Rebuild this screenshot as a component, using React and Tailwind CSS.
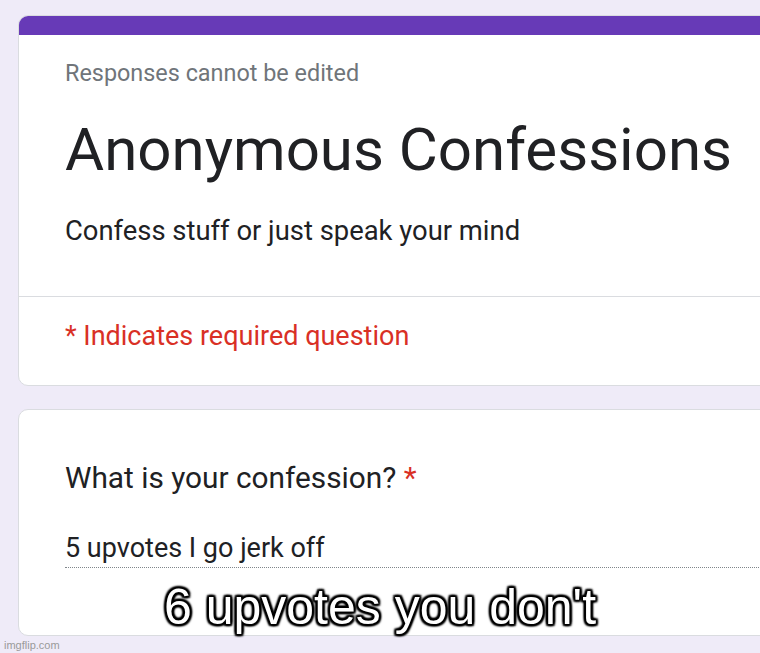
import React from "react";

export default function App() {
  const roboto = { fontFamily: "Roboto, 'Noto Sans', sans-serif" };
  return (
    <div className="relative w-[760px] h-[653px] overflow-hidden bg-[#efebf8]" style={roboto}>
      <div className="pl-[18px] pt-[15px] flex flex-col gap-[23px]">
        {/* Card 1 */}
        <div className="w-[800px] bg-white rounded-[10px] border border-[#dadce0] overflow-hidden">
          <div className="h-[19px] bg-[#673ab7]" />
          <div className="pl-[46px] pt-[23px] pb-[48px] border-b border-[#dadce0]">
            <div className="text-[23.4px] leading-[30px] text-[#70757a]">
              Responses cannot be edited
            </div>
            <div className="mt-[26px] text-[60px] leading-[72px] text-[#202124]">
              Anonymous Confessions
            </div>
            <div className="mt-[28px] text-[27.4px] leading-[34px] text-[#202124]">
              Confess stuff or just speak your mind
            </div>
          </div>
          <div className="pl-[46px] pt-[22px] pb-[32px]">
            <div className="text-[27px] leading-[34px] text-[#d93025]">
              * Indicates required question
            </div>
          </div>
        </div>

        {/* Card 2 */}
        <div className="w-[800px] h-[227px] bg-white rounded-[10px] border border-[#dadce0] pl-[46px] pt-[49px]">
          <div className="text-[29.8px] leading-[38px] text-[#202124]">
            What is your confession? <span className="text-[#d93025]">*</span>
          </div>
          <div className="mt-[34px] pb-[2px] border-b border-dotted border-[#80868b] text-[27px] leading-[34px] text-[#202124]">
            5 upvotes I go jerk off
          </div>
        </div>
      </div>

      {/* Meme caption overlay */}
      <div
        className="absolute inset-x-0 top-[582px] text-center text-[50px] leading-[50px] text-white [text-shadow:0_0_2px_#000,0_0_2px_#000,0_0_3px_#000,2px_2px_2px_#000,-2px_-2px_2px_#000,2px_-2px_2px_#000,-2px_2px_2px_#000,0_2px_2px_#000,0_-2px_2px_#000,2px_0_2px_#000,-2px_0_2px_#000]"
        style={{ fontFamily: "'Liberation Sans', Arial, sans-serif" }}
      >
        6 upvotes you don't
      </div>

      {/* Watermark */}
      <div
        className="absolute left-[4px] top-[637px] text-[11px] leading-[16px] text-[#9a9a9a]"
        style={{ fontFamily: "'Liberation Sans', Arial, sans-serif" }}
      >
        imgflip.com
      </div>
    </div>
  );
}
